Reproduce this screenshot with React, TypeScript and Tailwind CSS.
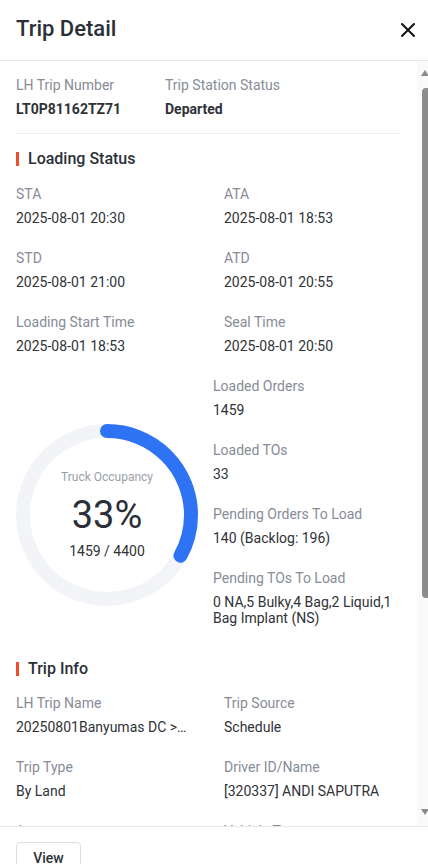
import React from "react";

const label = "text-[14px] leading-[20px] text-[#878c97]";
const value = "mt-[6px] text-[14px] leading-[16px] text-[#2f3237]";

function Field({ name, val, className }: { name: string; val: string; className?: string }) {
  return (
    <div className={className}>
      <div className={label}>{name}</div>
      <div className={value}>{val}</div>
    </div>
  );
}

function SectionTitle({ title }: { title: string }) {
  return (
    <div className="flex items-center gap-[9px] h-[24px]">
      <span className="w-[3px] h-[14px] bg-[#ee4d2d]" />
      <span className="text-[16px] font-medium text-[#2b3038]">{title}</span>
    </div>
  );
}

function Ring() {
  const r = 84;
  const c = 2 * Math.PI * r;
  const pct = 0.33;
  return (
    <div className="relative w-[182px] h-[182px] shrink-0">
      <svg width="182" height="182" viewBox="0 0 182 182">
        <circle cx="91" cy="91" r={r} fill="none" stroke="#f3f4f8" strokeWidth="14" />
        <circle
          cx="91"
          cy="91"
          r={r}
          fill="none"
          stroke="#2f73f5"
          strokeWidth="14"
          strokeLinecap="round"
          strokeDasharray={`${c * pct} ${c}`}
          transform="rotate(-90 91 91)"
        />
      </svg>
      <div className="absolute inset-0 flex flex-col items-center justify-center">
        <div className="text-[12px] leading-[16px] text-[#9a9ea7]">Truck Occupancy</div>
        <div className="mt-[8px] text-[38px] leading-[44px] text-[#2b3038]">33%</div>
        <div className="mt-[4px] text-[14px] leading-[20px] text-[#2f3237]">1459 / 4400</div>
      </div>
    </div>
  );
}

function Scrollbar() {
  return (
    <div className="w-[15px] shrink-0 bg-[#fafafa] flex flex-col">
      <svg width="15" height="15" viewBox="0 0 15 15" className="mt-[4px]">
        <polygon points="4,11 8,5 12,11" fill="#8a8a8a" />
      </svg>
      <div className="mt-[8px] ml-[5px] w-[9px] h-[510px] rounded-[4px] bg-[#8c8c8c]" />
      <div className="flex-1" />
      <svg width="15" height="15" viewBox="0 0 15 15" className="mb-[6px]">
        <polygon points="4,4 12,4 8,10" fill="#8a8a8a" />
      </svg>
    </div>
  );
}

export default function App() {
  return (
    <div
      className="w-[428px] h-[864px] overflow-hidden bg-white"
      style={{ fontFamily: "Roboto, 'Liberation Sans', sans-serif" }}
    >
      <div className="w-[432px] flex flex-col">
        <div className="h-[61px] shrink-0 flex items-center justify-between pl-[16px] pr-[20px] border-b border-[#e6e7eb]">
          <h1 className="text-[22px] font-medium text-[#2b3038] -mt-[3px]">Trip Detail</h1>
          <svg width="16" height="16" viewBox="0 0 16 16" className="mr-[-4px]">
            <path d="M2 2 L14 14 M14 2 L2 14" stroke="#111" strokeWidth="2" strokeLinecap="round" />
          </svg>
        </div>

        <div className="h-[765px] flex overflow-hidden">
          <div className="flex-1 min-w-0 overflow-hidden px-[16px] pt-[14px]">
            <div className="flex">
              <div className="w-[149px]">
                <div className={label}>LH Trip Number</div>
                <div className="mt-[4px] text-[14px] leading-[20px] font-bold text-[#2f3237]">LT0P81162TZ71</div>
              </div>
              <div>
                <div className={label}>Trip Station Status</div>
                <div className="mt-[4px] text-[14px] leading-[20px] font-bold text-[#2f3237]">Departed</div>
              </div>
            </div>
            <div className="mt-[14px] h-px bg-[#ececef]" />

            <div className="mt-[13px]">
              <SectionTitle title="Loading Status" />
            </div>
            <div className="mt-[13px] grid grid-cols-[208px_1fr] gap-y-[22px]">
              <Field name="STA" val="2025-08-01 20:30" />
              <Field name="ATA" val="2025-08-01 18:53" />
              <Field name="STD" val="2025-08-01 21:00" />
              <Field name="ATD" val="2025-08-01 20:55" />
              <Field name="Loading Start Time" val="2025-08-01 18:53" />
              <Field name="Seal Time" val="2025-08-01 20:50" />
            </div>

            <div className="mt-[22px] flex gap-[15px]">
              <div className="mt-[48px]">
                <Ring />
              </div>
              <div className="flex flex-col gap-[22px]">
                <Field name="Loaded Orders" val="1459" />
                <Field name="Loaded TOs" val="33" />
                <Field name="Pending Orders To Load" val="140 (Backlog: 196)" />
                <Field name="Pending TOs To Load" val="0 NA,5 Bulky,4 Bag,2 Liquid,1 Bag Implant (NS)" />
              </div>
            </div>

            <div className="mt-[31px]">
              <SectionTitle title="Trip Info" />
            </div>
            <div className="mt-[12px] grid grid-cols-[208px_1fr] gap-y-[22px]">
              <div>
                <div className={label}>LH Trip Name</div>
                <div className={`${value} w-[172px] truncate`}>20250801Banyumas DC &gt; Purwokerto LH</div>
              </div>
              <Field name="Trip Source" val="Schedule" />
              <Field name="Trip Type" val="By Land" />
              <Field name="Driver ID/Name" val="[320337] ANDI SAPUTRA" />
              <Field name="Agency" val="-" />
              <Field name="Vehicle Type" val="Wingbox" />
            </div>
          </div>
          <Scrollbar />
        </div>

        <div className="border-t border-[#e6e7eb] pl-[16px] pt-[15px]">
          <button className="h-[32px] w-[65px] rounded-[4px] border border-[#dcdde1] bg-white text-[14px] font-medium text-[#2b3038]">
            View
          </button>
        </div>
      </div>
    </div>
  );
}
